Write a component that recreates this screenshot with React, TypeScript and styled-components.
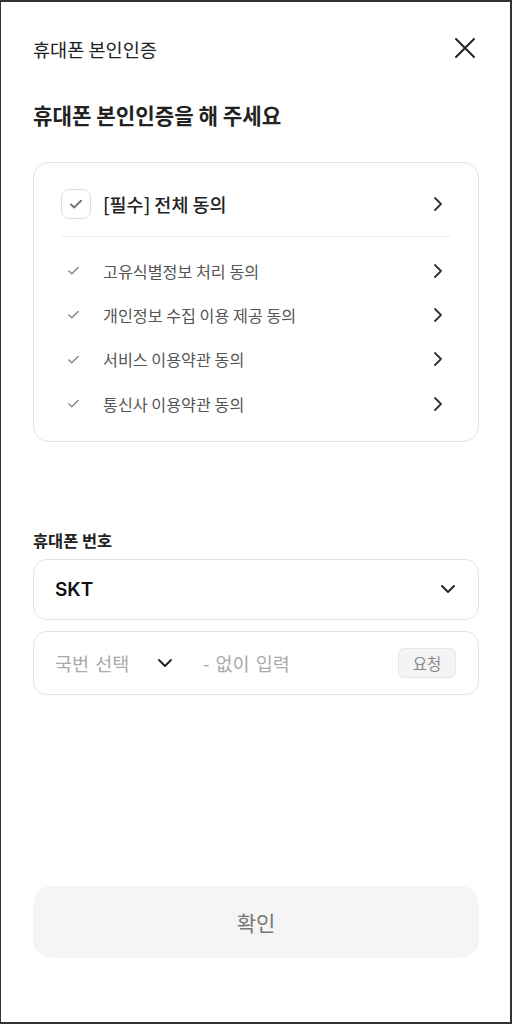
import React from "react";
import styled, { createGlobalStyle } from "styled-components";

const Global = createGlobalStyle`
  html, body { margin: 0; padding: 0; background: #fff; }
  body { font-family: "Noto Sans CJK KR", "Noto Sans", sans-serif; }
  * { box-sizing: border-box; }
`;

const Frame = styled.div`
  width: 512px;
  height: 1024px;
  border: 2px solid #333;
  border-left-width: 1px;
  background: #fff;
  display: flex;
  flex-direction: column;
  padding: 0 31px 0 32px;
`;

const Header = styled.div`
  height: 92px;
  display: flex;
  align-items: center;
  justify-content: space-between;
`;

const HeaderTitle = styled.div`
  font-size: 18.6px;
  color: #222;
`;

const CloseBtn = styled.div`
  width: 24px;
  height: 24px;
  margin-right: 2px;
  display: flex;
`;

const Heading = styled.h1`
  margin: 0;
  font-size: 21.2px;
  font-weight: 700;
  color: #222;
  line-height: 42px;
`;

const Card = styled.div`
  margin-top: 26px;
  border: 1px solid #e4e4e4;
  border-radius: 16px;
  padding: 25px 27px 15px 27px;
  display: flex;
  flex-direction: column;
`;

const AllRow = styled.div`
  display: flex;
  align-items: center;
  height: 32px;
  gap: 12px;
`;

const CheckBox = styled.div`
  width: 30px;
  height: 30px;
  border: 1.5px solid #dcdcdc;
  border-radius: 8px;
  display: flex;
  align-items: center;
  justify-content: center;
`;

const AllLabel = styled.div`
  flex: 1;
  font-size: 18.5px;
  font-weight: 500;
  color: #222;
`;

const Divider = styled.div`
  height: 1px;
  background: #ededed;
  margin: 16px 0 11.5px;
`;

const ItemRow = styled.div`
  display: flex;
  align-items: center;
  height: 44.3px;
`;

const ItemCheck = styled.div`
  width: 42px;
  padding-left: 6px;
  display: flex;
`;

const ItemLabel = styled.div`
  flex: 1;
  font-size: 16.2px;
  color: #555;
`;

const Chevron = styled.div`
  width: 16px;
  display: flex;
  justify-content: center;
  margin-right: 5px;
`;

const Label = styled.div`
  margin-top: 79px;
  font-size: 16.4px;
  font-weight: 600;
  color: #222;
  line-height: 38px;
`;

const Field = styled.div<{ $h: number }>`
  height: ${(p) => p.$h}px;
  border: 1px solid #e4e4e4;
  border-radius: 14px;
  display: flex;
  align-items: center;
  padding: 0 22px 0 21px;
  margin-bottom: 11px;
`;

const SelectValue = styled.div`
  flex: 1;
  font-family: "Inter", "Noto Sans CJK KR", sans-serif;
  font-size: 19px;
  font-weight: 600;
  color: #111;
`;

const Placeholder = styled.div<{ $w?: number }>`
  font-size: 18.5px;
  color: #aaa;
  word-spacing: 2px;
  ${(p) => (p.$w ? `width: ${p.$w}px;` : "flex: 1;")}
`;

const PrefixChevron = styled.div`
  width: 46px;
  display: flex;
`;

const RequestBtn = styled.div`
  width: 58px;
  height: 30px;
  border: 1px solid #e6e6e6;
  background: #f4f4f4;
  border-radius: 6px;
  display: flex;
  align-items: center;
  justify-content: center;
  font-size: 15.5px;
  color: #888;
`;

const Spacer = styled.div`
  flex: 1;
`;

const Confirm = styled.div`
  height: 72px;
  margin-bottom: 64px;
  background: #f5f5f5;
  border-radius: 18px;
  display: flex;
  align-items: center;
  justify-content: center;
  font-size: 21px;
  color: #777;
`;

const Check = ({ size = 14, color = "#777", sw = 2 }) => (
  <svg width={size} height={size} viewBox="0 0 14 14" fill="none">
    <path d="M2 7.5l3.2 3L12 3.8" stroke={color} strokeWidth={sw} strokeLinecap="round" strokeLinejoin="round" />
  </svg>
);

const Right = () => (
  <svg width="10" height="16" viewBox="0 0 10 16" fill="none">
    <path d="M2 2l6 6-6 6" stroke="#333" strokeWidth="1.8" strokeLinecap="round" strokeLinejoin="round" />
  </svg>
);

const Down = () => (
  <svg width="16" height="10" viewBox="0 0 16 10" fill="none">
    <path d="M2 2l6 6 6-6" stroke="#222" strokeWidth="1.9" strokeLinecap="round" strokeLinejoin="round" />
  </svg>
);

const items = [
  "고유식별정보 처리 동의",
  "개인정보 수집 이용 제공 동의",
  "서비스 이용약관 동의",
  "통신사 이용약관 동의",
];

export default function App() {
  return (
    <>
      <Global />
      <Frame>
        <Header>
          <HeaderTitle>휴대폰 본인인증</HeaderTitle>
          <CloseBtn>
            <svg width="24" height="24" viewBox="0 0 24 24" fill="none">
              <path d="M3 3l18 18M21 3L3 21" stroke="#222" strokeWidth="2" strokeLinecap="round" />
            </svg>
          </CloseBtn>
        </Header>
        <Heading>휴대폰 본인인증을 해 주세요</Heading>
        <Card>
          <AllRow>
            <CheckBox>
              <Check size={14} color="#777" sw={2} />
            </CheckBox>
            <AllLabel>[필수] 전체 동의</AllLabel>
            <Chevron>
              <Right />
            </Chevron>
          </AllRow>
          <Divider />
          {items.map((t) => (
            <ItemRow key={t}>
              <ItemCheck>
                <Check size={13} color="#888" sw={1.6} />
              </ItemCheck>
              <ItemLabel>{t}</ItemLabel>
              <Chevron>
                <Right />
              </Chevron>
            </ItemRow>
          ))}
        </Card>
        <Label>휴대폰 번호</Label>
        <Field $h={61}>
          <SelectValue>SKT</SelectValue>
          <Down />
        </Field>
        <Field $h={64}>
          <Placeholder $w={102}>국번 선택</Placeholder>
          <PrefixChevron>
            <Down />
          </PrefixChevron>
          <Placeholder>- 없이 입력</Placeholder>
          <RequestBtn>요청</RequestBtn>
        </Field>
        <Spacer />
        <Confirm>확인</Confirm>
      </Frame>
    </>
  );
}
